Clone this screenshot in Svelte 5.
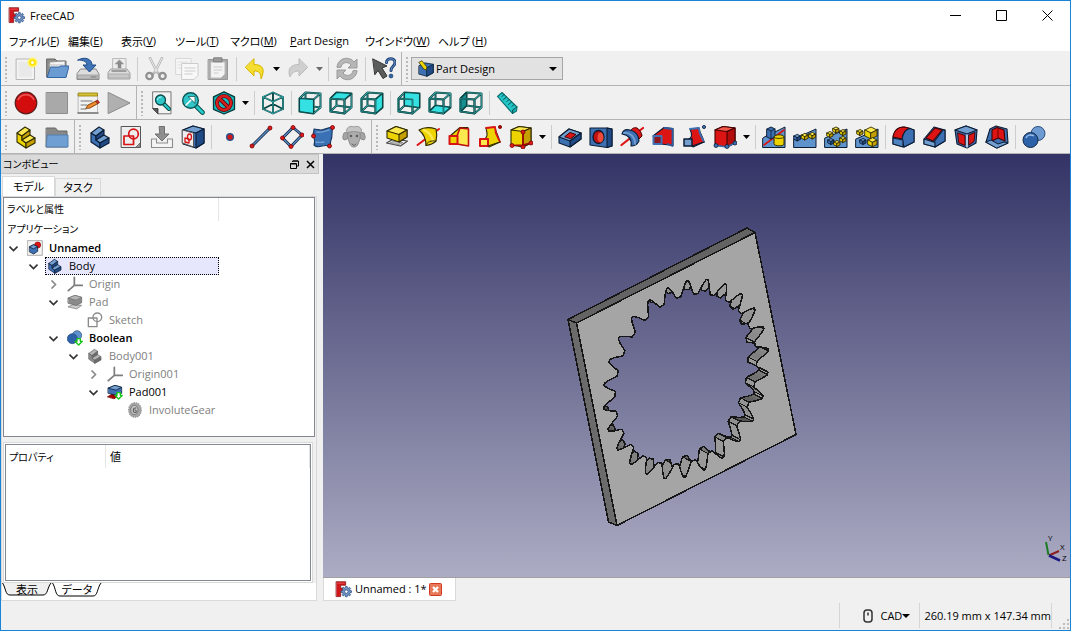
<script>
  const p = (d, fill = 'none', stroke = '#0b1521', w = 1.1) =>
    `<path d="${d}" fill="${fill}" stroke="${stroke}" stroke-width="${w}" stroke-linejoin="round" stroke-linecap="round"/>`;
  const dot = (x, y, r = 2, fill = '#e01b1b', stroke = '#7a0000') =>
    `<circle cx="${x}" cy="${y}" r="${r}" fill="${fill}" stroke="${stroke}" stroke-width=".8"/>`;

  const NAVY = '#0b1d35', BLUE = '#3d70b2', LIGHT = '#729fcf', DEEP = '#1f4a86';
  const YEL = '#edd400', PALE = '#fce94f', GOLD = '#c4a000', BROWN = '#302b00';
  const RED = '#dd1414', DRED = '#a40000';

  // Wireframe cube with one highlighted face
  const corners = { A: '1.5 7.5', B: '15.5 8.5', C: '15.5 22.5', D: '1.5 20.5', E: '7.5 1.5', F: '22.5 2.5', G: '22.5 16.5', H: '7.5 14.5' };
  const poly = (names) => 'M' + [...names].map((n) => corners[n]).join('L') + 'z';
  const wires = poly('ABCD') + poly('EFGH') + ['AE', 'BF', 'CG', 'DH'].map((n) => poly(n)).join('');
  const cube = (face) =>
    p(wires, 'none', '#0a4543', 2) + p(wires, 'none', '#3fb9b9', 0.6) +
    p(poly(face), face === 'ADHE' ? '#178f92' : '#34e0e2', '#0a4543', 1.1) +
    (face === 'ABCD' ? '' : p(poly('ABCD'), 'none', '#0a4543', 1.6) + p(poly('ABCD'), 'none', '#3fb9b9', 0.5));

  // Small isometric block
  const block = (x, y, s, top, left, right, line = NAVY) =>
    p(`M${x} ${y}l${s} ${-s / 2}l${s} ${s / 2}l${-s} ${s / 2}z`, top, line, 0.9) +
    p(`M${x} ${y}l${s} ${s / 2}v${s}l${-s} ${-s / 2}z`, left, line, 0.9) +
    p(`M${x + s} ${y + s / 2}l${s} ${-s / 2}v${s}l${-s} ${s / 2}z`, right, line, 0.9);
  const yb = (x, y, s) => block(x, y, s, PALE, YEL, GOLD, BROWN);
  const bb = (x, y, s) => block(x, y, s, LIGHT, BLUE, DEEP);

  // Stepped solid
  const step = (a, b, c, line) =>
    p('M3 8l5 3v4l4 3v5l-9-6z', b, line) + p('M3 8l8-6 5 3-8 6z', a, line) +
    p('M8 11l8-6v5l-8 5z', c, line) + p('M8 15l8-5 5 3-9 5z', a, line) + p('M12 18l9-5v5l-9 5z', c, line);

  const gearTeeth = (cx, cy, r, n) => {
    let d = '';
    for (let i = 0; i < n; i++) {
      const a = (i / n) * Math.PI * 2;
      for (const [o, k] of [[-0.26, 0.74], [-0.16, 1], [0.16, 1], [0.26, 0.74]]) {
        d += `${d ? 'L' : 'M'}${(cx + r * k * Math.cos(a + o)).toFixed(2)} ${(cy + r * k * Math.sin(a + o)).toFixed(2)}`;
      }
    }
    return d + 'z';
  };
  const downBadge = p('M15 13h5v4h3l-5.500 5.500-5.500-5.500h3z', '#fff', '#14c414', 2);

  const icons = {
    app: p('M2 1h13v5H8v4h5v4.500H8V22H2z', '#d3161b', '#7b0d10', 1) + p('M4 3h9', 'none', '#f56a6a', 1) +
      p(gearTeeth(16, 15, 7.5, 8), '#6d93c4', '#2a4a7d', 1) + `<circle cx="16" cy="15" r="2.400" fill="#fff" stroke="#2a4a7d"/>`,
    newDoc: p('M2.500 2h18v20.500h-18z', '#f4f4f4', '#b5b5b5', 1) + p('M5 5h13v15H5z', '#e9e9e9', '#ededed', 1) +
      `<circle cx="18.500" cy="5.500" r="5" fill="#fff36a"/><circle cx="18.500" cy="5.500" r="3.300" fill="#fbe30a"/><circle cx="18.500" cy="5.500" r="1.500" fill="#fff"/>`,
    open: p('M2 2h8l2 2h9v16H2z', '#8a8d88', '#666', 1) + p('M5 5l15-1v12H5z', '#f5f5f5', '#999', 1) + p('M4 8h14', 'none', '#bbb') +
      p('M6 10h8l2-1h8l-3 11.500H2.500z', '#6a9bd3', '#3465a4', 1),
    save: p('M5 12h15l3 5v5.500H1V17z', '#ddd', '#888', 1) + p('M2 18h20v4H2z', '#bcbcbc', '#999', 0.8) + p('M15 20h5', 'none', '#777') +
      p('M2 3c7-4 14-1 14 5h4l-6.500 7L7 8h4c0-3-3-5-9-5z', '#3f75b8', '#204a87', 1),
    print: p('M6 1.500h13v12H6z', '#ececec', '#bbb', 1) + p('M12.500 3l4 4h-2.500v4h-3V7H8.500z', '#8b8b8b', '#8b8b8b', 0.5) +
      p('M4 12h16l3 4v6H1v-6z', '#dcdcdc', '#a0a0a0', 1) + p('M2 17h20v4H2z', '#c8c8c8', '#a8a8a8', 0.8) + p('M5 14h14', 'none', '#888', 1.3),
    cut: p('M6 1l7 14 3 3M18 1l-7 14-3 3', 'none', '#b5b5b5', 2.6) + p('M6 1l7 14M18 1l-7 14', 'none', '#ececec', 1) +
      `<circle cx="5.500" cy="19" r="3.200" fill="none" stroke="#909090" stroke-width="2.300"/><circle cx="18.500" cy="19" r="3.200" fill="none" stroke="#909090" stroke-width="2.300"/>`,
    copy: p('M1 1.500h15v16H1z', '#f6f6f6', '#d8d8d8', 1) + p('M7 6.500h16v12l-4 4H7z', '#f8f8f8', '#cccccc', 1) + p('M10 11h10M10 14h10M10 17h7', 'none', '#dadada', 1.6) + p('M3 5h10M3 8h3M3 11h3', 'none', '#ddd'),
    paste: p('M2.500 2.500h19v20h-19z', '#aaa', '#979797', 1) + p('M5 5h14v12l-4 4H5z', '#f3f3f3', '#bbb', 1) + p('M8 .8h8v4H8z', '#9b9b9b', '#808080', 1) + p('M8 10h8M8 13h8M8 16h4', 'none', '#ccc'),
    undo: p('M11 2v5.500c8 0 12 4 7 14.500 0-6-2-8-7-8v5L2.500 10.500z', '#f5dc30', '#d6b600', 1),
    redo: p('M13 2v5.500C5 7.500 1 11.500 4 20c2-4 4-6 9-6v5l8.500-8.500z', '#cfcfcf', '#bbb', 1),
    refresh: p('M2 10C3 0 15-1 19 5l3-3v9h-9l3-3C13 4 7 5 6 10z', '#b6b6b6', '#9a9a9a', 1) + p('M22 14c-1 10-13 11-17 5l-3 3v-9h9l-3 3c3 4 9 3 10-2z', '#b6b6b6', '#9a9a9a', 1),
    whats: p('M1 2l14 7-5 2 5 8-4 2.500-5-8-3 4z', '#5a5d5c', '#333', 1) + p('M14.500 5.500c0-5 8.500-5 8.500 0 0 4-4 3.500-4 8', 'none', '#1d4176', 3) + p('M14.500 5.500c0-5 8.500-5 8.500 0 0 4-4 3.500-4 8', 'none', '#6b99d0', 1) + dot(19, 19, 1.9, '#3465a4', '#1d4176'),
    record: `<circle cx="12" cy="12" r="10.800" fill="#d30d0d" stroke="#5c1d1d" stroke-width="1.200"/><path d="M4 9c3-7 13-7 16 0" fill="none" stroke="#ee5a5a" stroke-width="1.500"/>`,
    stop: p('M1.500 1.500h21v21h-21z', '#a9a9a9', '#8d8d8d', 1),
    macro: p('M2.500 3h19v19h-19z', '#f2f2f2', '#bbb', 1) + p('M2 22h20', 'none', '#777', 1.6) + p('M2.500 2h19v3h-19z', '#d8c338', '#8f7a00', 0.8) + p('M5 10h11M5 14h6M5 18h5', 'none', '#777', 1.1) + p('M10 17l2-3 8-4 2 2.500-8 4.500z', '#f08a2e', '#7a3c00', 0.9) + p('M20 10l1.500-1 2 2.500-1.500 1z', '#e0312c', '#7a1c1c', 0.8),
    play: p('M1.500 1.500L23 12 1.500 22.500z', '#b0b0b0', '#8a8a8a', 1),
    fitAll: p('M3 .8h18v22H8l-5-5z', '#f3f3f3', '#777', 1) + p('M3 17.500h5v5z', '#555', '#333', 0.8) + p('M13 12l6 6', 'none', '#0b4a4a', 4) + p('M13 12l6 6', 'none', '#24cccc', 2) + `<circle cx="10.500" cy="9" r="5" fill="#2fc6c8" stroke="#0b4a4a" stroke-width="1.300"/><path d="M7.500 9c0-2 2-3 4-3" stroke="#c8ffff" fill="none"/>`,
    zoomSel: p('M14 14l7.500 7.500', 'none', '#0b4a4a', 4.6) + p('M14 14l7.500 7.500', 'none', '#24cccc', 2.8) + `<circle cx="9.500" cy="9.500" r="7.800" fill="#31c5c8" stroke="#0b5555" stroke-width="1.400"/>` + p('M5 14l6-6', 'none', '#fff', 1.6) + p('M7.500 5.500H14V12z', '#fff', '#0b4a4a', 0.7),
    drawStyle: p('M12 .8l10.500 5v12.500L12 23 1.500 18.300V5.800z', '#18b9bd', '#063a3a', 1.3) + `<circle cx="12" cy="12" r="7" fill="none" stroke="#5a0505" stroke-width="4"/>` + p('M7.500 7.500l9 9', 'none', '#5a0505', 4) + `<circle cx="12" cy="12" r="7" fill="none" stroke="#d82020" stroke-width="2.400"/>` + p('M7.500 7.500l9 9', 'none', '#d82020', 2.4),
    iso: p('M12 1.500l10 4.500v12L12 22.500 2 18V6zM2 6l10 4.500L22 6M12 10.500v12M2 18l10-5 10 5M12 1.500V13', 'none', '#0a4543', 1.9) + p('M12 1.500l10 4.500v12L12 22.500 2 18V6zM2 6l10 4.500L22 6M12 10.500v12', 'none', '#3fc9c9', 0.7),
    front: cube('ABCD'), top: cube('ABFE'), right: cube('BCGF'), rear: cube('EFGH'), bottom: cube('DCGH'), left: cube('ADHE'),
    ruler: p('M1.500 5.500L6 1.500l15 14.500-.5 4-4 2.500z', '#22c4c6', '#0a6c6c', 1.1) + p('M21 16l-4.500 3v3.500', '#129a9c', '#0a5c5c', 1) + p('M8 3.500l-2 2M10.500 6l-3 2.500M13 8.500l-2 2M15.500 11l-3 2.500M18 13.500l-2 2', 'none', '#0a4a4a', 1),
    part: step(PALE, YEL, GOLD, BROWN),
    group: p('M1.500 3h9l2.500 3h9v16h-20.500z', '#888', '#666', 1) + p('M2.500 10h20.500v12H1.500z', '#709fd3', '#5580af', 1),
    body: step(LIGHT, BLUE, DEEP, NAVY),
    bodyGrey: step('#b5b5b5', '#8b8b8b', '#6b6b6b', '#666'),
    sketch: p('M2.500 1.500h19v21h-19z', '#eee', '#555', 1) + p('M5 11h9.500v8.500H5z', 'none', '#d81313', 1.7) + `<circle cx="14.500" cy="9" r="4.800" fill="none" stroke="#d81313" stroke-width="1.700"/>` + p('M17 22l4-4v4z', '#999', '#666', 0.8),
    importSk: p('M1.500 14h5v4h11v-4h5v8.500h-21z', '#f4f4f4', '#8c8c8c', 1.1) + p('M9.500 1.500h5V9h4.500L12 16 5 9h4.500z', '#8f8f8f', '#707070', 1),
    mapSk: p('M2 5l10-4 11 3v14l-8 5-13-4z', BLUE, NAVY) + p('M2 5l10-4 11 3-8 4z', LIGHT, NAVY) + p('M15 8l8-4v14l-8 5z', DEEP, NAVY) + p('M1.500 5l11 3v14l-11-4z', '#eee', '#555', 1) + p('M4 13l4 1v4l-4-1z', 'none', '#d81313', 1.3) + `<ellipse cx="8.500" cy="12" rx="2" ry="3" fill="none" stroke="#d81313" stroke-width="1.300"/>`,
    point: `<circle cx="12" cy="12" r="3.300" fill="#d01818" stroke="#28508d" stroke-width="1.400"/>`,
    line: p('M3 21L21 3', 'none', NAVY, 3) + p('M3 21L21 3', 'none', '#5a8ac8', 1.5) + dot(3, 21) + dot(21, 3),
    plane: p('M13 2.500L22 10 11 21.500 2.500 13z', 'none', NAVY, 2.8) + p('M13 2.500L22 10 11 21.500 2.500 13z', 'none', '#5a8ac8', 1.4) + dot(13, 2.5) + dot(22, 10) + dot(11, 21.5) + dot(2.5, 13),
    binder: p('M3 4c3 0 4 1 7 1 4 0 7-3 12-3-2 5 0 9-2 13-1 2 0 4-1 6-4-1-5-1-8 0-3 1-6 1-8-1 1-3 1-6-1-9 0-3 1-4 1-7z', '#3a70b4', '#16365f') + p('M6 7c5 1 8-1 12-2M5 17c3 1 6 0 8 0', 'none', LIGHT, 1.4) + dot(21.5, 2.5) + dot(2.5, 11) + dot(18.5, 21),
    sheep: p('M7 7l-5 1c-1 3-2 5 0 7l3-1zM17 7l5 1c1 3 2 5 0 7l-3-1z', '#a5a5a5', '#8a8a8a', 1) + p('M6 8c3-2 9-2 12 0 1 5-1 8-2 11-1 4-7 4-8 0-1-3-3-6-2-11z', '#adadad', '#8a8a8a', 1) + p('M5 8C3 3 8 0 12 2c4-2 9 1 7 6-4-2-10-2-14 0z', '#c4c4c4', '#999', 1) + dot(9, 11, 0.9, '#555', '#555') + dot(15, 11, 0.9, '#555', '#555') + p('M10 19l2 1.500 2-1.500', 'none', '#666', 1),
    pad: p('M1.500 18l7-4 14 2-7 5z', '#f2f2f2', '#444', 1.2) + p('M5 18l4-2 9 1.500-4 2z', '#bbb', '#777', 0.7) + p('M2 6l9-4.500L22 5v7l-8 5L2 13z', YEL, BROWN) + p('M2 6l9-4.500L22 5l-8 4.500z', PALE, BROWN) + p('M14 9.500L22 5v7l-8 5z', GOLD, BROWN),
    revolve: p('M1.500 20L23 4', 'none', RED, 2) + p('M3 5c5-3 11-3 17-1 1 4 1 8 0 12-3 3-6 4-10 4.500C10 14 8 9 3 5z', YEL, BROWN) + p('M8 5c5 2 8 6 9 11', 'none', PALE, 2.5) + p('M10 20.500c1-4 5-5 10-4.500', 'none', BROWN, 1),
    loftY: p('M3 11L13 2.500h8v18L10 19z', YEL, BROWN) + p('M13 3l8.500 1v17L10 19V11z', PALE, '#c01010', 1.6) + p('M2.500 11h8v8h-8z', YEL, '#d81313', 2),
    sweepY: p('M5 15C11 12 9 8 8 3l9-1c1 6 4 10 5 15l-11 5z', YEL, BROWN) + p('M8 3l9-1c0 8 3 10 5 15', 'none', RED, 1.8) + p('M2 14h8v7H2z', PALE, '#d81313', 2) + p('M10 21l12-4', 'none', BROWN) + dot(22, 2, 1.6, DRED),
    boxY: p('M2 5l8-3.500L22 3v15l-8 4-12-2z', YEL, BROWN) + p('M2 5l8-3.500L22 3l-8 3.500z', PALE, BROWN) + p('M14 6.500L22 3v15l-8 4z', GOLD, BROWN) + p('M14 7v13M14 20L3 20.500M14 20l8-2', 'none', DRED, 1.6) + dot(14, 7) + dot(3, 20.5) + dot(22, 18) + dot(14, 22),
    pocket: p('M1 12l10-8 12 4v6l-11 8-11-4z', BLUE, NAVY) + p('M1 12l10-8 12 4-11 8z', LIGHT, NAVY) + p('M12 16l11-8v6l-11 8z', DEEP, NAVY) + p('M7 11.500l5-4 6 2-5 4z', RED, '#400', 1),
    hole: p('M1 3h17l5 1v17l-5 1.500L1 20z', BLUE, NAVY) + p('M18 3l5 1v17l-5 1.500z', DEEP, NAVY) + `<ellipse cx="9.500" cy="12" rx="5.500" ry="6.500" fill="#c01010" stroke="#081a33" stroke-width="1.300"/><ellipse cx="11.500" cy="12.500" rx="3" ry="5" fill="#f04a3a"/>`,
    groove: p('M1.500 20L23 3', 'none', RED, 2.2) + p('M10 6c2-3 5-4 7-3s5 5 5 8l-5 5z', RED, '#400', 1) + p('M2 9c1-4 4-5 8-4 6 1 9 6 9 11-2 4-5 5-8 5 1-7-3-11-9-12z', BLUE, NAVY) + p('M4 8c6-1 11 4 11 11', 'none', LIGHT, 1.8),
    loftR: p('M2 11L13 2.500l9 1v17L10 19z', RED, NAVY) + p('M13.500 3l8 1v17l-5-2', 'none', '#2f5c9d', 1.8) + p('M2.500 11h8v8h-8z', '#8b1720', '#3f70b4', 2),
    sweepR: p('M5 15C11 13 10 9 8 4l9-1c1 6 4 9 5 14l-11 5z', RED, NAVY) + p('M8 4l9-1c0 8 3 9 5 14', 'none', BLUE, 1.8) + p('M2 14h8v7H2z', LIGHT, NAVY, 1.5) + p('M10 21l12-4', 'none', NAVY) + dot(22, 2, 1.6, BLUE, NAVY),
    boxR: p('M2 5l8-3.500L22 3v15l-8 4-12-2z', RED, '#400') + p('M2 5l8-3.500L22 3l-8 3.500z', '#f25b4c', '#400') + p('M14 6.500L22 3v15l-8 4z', '#b40d0d', '#400') + p('M3 20.500L14 22l8-4', 'none', BLUE, 1.5) + dot(3, 20.5, 2, BLUE, NAVY) + dot(22, 18, 2, BLUE, NAVY) + dot(14, 21.5, 2, BLUE, NAVY),
    mirror: p('M1 13l8-5 6-2 8-4v20.500H1z', '#5f93cc', NAVY, 1) + p('M2 20l20-15', 'none', RED, 1.6) + p('M5 4l4-2 4 2v8l-4 2-4-2z', BLUE, NAVY, 1) + p('M5 4l4 2 4-2M9 6v8', 'none', NAVY, 0.8) + p('M12 12c0-3 10-3 10 0v7c0 2.500-10 2.500-10 0z', YEL, BROWN, 1) + p('M12 12c0 2 10 2 10 0', 'none', BROWN, 0.9),
    linear: p('M1 14L23 4v18.500H1z', '#5f93cc', NAVY, 1) + bb(1, 11, 3.3) + yb(8.500, 10, 3.3) + yb(16, 9, 3.3),
    polar: p('M1 13L23 4v18.500H1z', '#5f93cc', NAVY, 1) + yb(9, 3.500, 3) + yb(16, 6, 3) + yb(3, 8, 3) + yb(16, 13, 3) + bb(4, 15, 3) + yb(10, 17, 3),
    multi: p('M1 14L23 4v18.500H1z', '#5f93cc', NAVY, 1) + yb(10, 5, 6) + yb(2, 6, 3) + bb(5, 15, 3) + yb(13, 15, 4.5),
    fillet: p('M1 13C2 5 7 2 12 2l10 3v12l-10 5-11-3z', BLUE, NAVY) + p('M1 12C2 5 7 2 12 2l6 1.200C14 4 11 8 10 14z', RED, '#400') + p('M10 14.500C11 8 14 4 18 3.500L22 5v12l-10 5z', BLUE, NAVY) + p('M1 13l10 2v7L1 19z', '#4f82c0', NAVY),
    chamfer: p('M1 14L11 2l11 3v11l-10 6-11-3z', BLUE, NAVY) + p('M3 13L12 3l7 2-9 11z', RED, '#400') + p('M11 17l9-12 2 0v11l-10 6z', BLUE, NAVY) + p('M1 14l11 3.500V22L1 19z', LIGHT, NAVY),
    draft: p('M1 5l11-4 11 4-1 13-9 5-10-4z', BLUE, NAVY) + p('M1 5l11-4 11 4-10 4z', LIGHT, NAVY) + p('M4 8l7 2.500v10l-6-2.500zM15 10l6-2.500-1 9-5 3.500z', RED, '#400', 0.9) + p('M13 10v12', 'none', '#e9eef5', 1.4),
    thick: p('M1 17L5 4l6-3 11 3 1 14-11 5z', BLUE, NAVY) + p('M7 5l5-2.500 7 2.500 1 11-7-3-6 3z', RED, '#400') + p('M13 3v10', 'none', '#7a0000', 1.1) + p('M1 17l5-2 7 4 6-2 4 1-11 5z', LIGHT, NAVY, 1),
    bool: `<circle cx="16" cy="8.500" r="7" fill="#6e9bd1" stroke="#2b4e80"/><circle cx="8.500" cy="15" r="7.500" fill="#2e62a8" stroke="#12294a"/><path d="M4 13c1-3 5-4 8-2" fill="none" stroke="#9bc0ea" stroke-width="1.500"/>`,
    wb: p('M3 8l8-4 12 2v12l-9 5-11-3z', BLUE, NAVY) + p('M14 11l9-5v12l-9 5z', DEEP, NAVY) + p('M3 3l4-2 7 9-1 4-3-1z', YEL, BROWN, 1),
    doc: p('M1 1h22v22H1z', '#f3f3f3', '#888', 1) + `<circle cx="16" cy="7.500" r="4.500" fill="#dd1414" stroke="#900"/>` + p('M4 10l6-3 6 3v7l-6 4-6-3z', BLUE, NAVY) + p('M4 10l6-3 6 3-6 3z', LIGHT, NAVY),
    origin: p('M11 2v12h12M11 14L2 22', 'none', '#7d7d7d', 2.6),
    padGrey: p('M2 19l7-3 13 1-7 5z', '#ccc', '#777') + p('M2 6l10-4 10 3v8l-8 4-12-3z', '#8b8b8b', '#666') + p('M2 6l10-4 10 3-8 4z', '#b5b5b5', '#777'),
    sketchGrey: p('M2 9h13v13H2z', 'none', '#8a8a8a', 2) + `<circle cx="15.500" cy="8" r="6.500" fill="none" stroke="#8a8a8a" stroke-width="2"/>`,
    boolTree: `<circle cx="15" cy="8" r="7" fill="#5f92cc" stroke="#2b4e80"/><circle cx="8" cy="13" r="7.500" fill="#2e62a8" stroke="#204a80"/>` + downBadge,
    padTree: p('M1 19l7-4 10 2-7 5z', DRED, '#700') + p('M2 6l10-4 10 3v9l-8 3-12-3z', BLUE, NAVY) + p('M2 6l10-4 10 3-8 4z', LIGHT, NAVY) + downBadge,
    gear: `<ellipse cx="12" cy="12" rx="9.500" ry="11" fill="#a6a6a6" stroke="#8a8a8a" stroke-width="1.600" stroke-dasharray="2 1.500"/><ellipse cx="11" cy="12" rx="5.500" ry="7" fill="#c6c6c6" stroke="#777" stroke-width="1.400"/>` + p('M13 9c-4-1-5 7-1 7 3 0 2-4 0-4', 'none', '#555', 1.6)
  };

  const menus = [
    ['ファイル', 'F'], ['編集', 'E'], ['表示', 'V'], ['ツール', 'T'], ['マクロ', 'M'], ['Part Design', ''], ['ウインドウ', 'W'], ['ヘルプ ', 'H']
  ];

  // '|' is a separator, 'v' a drop-down arrow, 'x' a disabled arrow
  const rows = [
    ['newDoc open save print | cut copy paste | undo v redo x | refresh | whats', 'workbench'],
    ['record stop macro play', 'fitAll zoomSel drawStyle v | iso | front top right | rear bottom left | ruler'],
    ['part group', 'body sketch importSk mapSk | point line plane binder sheep', 'pad revolve loftY sweepY boxY v | pocket hole groove loftR sweepR boxR v | mirror linear polar multi | fillet chamfer draft thick | bool']
  ].map((row) => row.map((bar) => bar.split(' ')));

  const tree = [
    { name: 'Unnamed', icon: 'doc', level: 0, open: true, bold: true },
    { name: 'Body', icon: 'body', level: 1, open: true },
    { name: 'Origin', icon: 'origin', level: 2, open: false, dim: true },
    { name: 'Pad', icon: 'padGrey', level: 2, open: true, dim: true },
    { name: 'Sketch', icon: 'sketchGrey', level: 3, dim: true },
    { name: 'Boolean', icon: 'boolTree', level: 2, open: true, bold: true },
    { name: 'Body001', icon: 'bodyGrey', level: 3, open: true, dim: true },
    { name: 'Origin001', icon: 'origin', level: 4, open: false, dim: true },
    { name: 'Pad001', icon: 'padTree', level: 4, open: true },
    { name: 'InvoluteGear', icon: 'gear', level: 5, dim: true }
  ];
  let selected = $state('Body');

  // Gear-shaped opening: polar profile projected on the plate's two half-edges
  const TEETH = 26;
  const center = [686, 379], ea = [89.4, -45], eb = [20.5, 101], depth = [-8.6, -4.4];
  const profile = [[-5.2, 0.772], [-4.6, 0.785], [-3.8, 0.81], [-2.9, 0.84], [-1.9, 0.87], [-0.7, 0.9], [0.7, 0.9], [1.9, 0.87], [2.9, 0.84], [3.8, 0.81], [4.6, 0.785], [5.2, 0.772]];
  const rim = [];
  for (let i = 0; i < TEETH; i++) {
    for (const [off, k] of profile) {
      const t = (((i + 0.5) * 360) / TEETH + off) * (Math.PI / 180);
      rim.push([
        center[0] + k * (Math.cos(t) * ea[0] + Math.sin(t) * eb[0]),
        center[1] + k * (Math.cos(t) * ea[1] + Math.sin(t) * eb[1])
      ]);
    }
  }
  const pt = ([x, y]) => `${x.toFixed(1)} ${y.toFixed(1)}`;
  const back = rim.map(([x, y]) => [x + depth[0], y + depth[1]]);
  const rimPath = 'M' + rim.map(pt).join('L') + 'z';
  const backPath = 'M' + back.map(pt).join('L') + 'z';
  const walls = rim.map((a, i) => {
    const j = (i + 1) % rim.length;
    const b = rim[j];
    const len = Math.hypot(b[0] - a[0], b[1] - a[1]);
    const g = Math.round(80 + 75 * Math.abs((b[1] - a[1]) / len));
    return { d: `M${pt(a)}L${pt(b)}L${pt(back[j])}L${pt(back[i])}z`, fill: `rgb(${g},${g},${g})` };
  });
  const ribs = rim.map((a, i) => ({ a, b: back[i], k: i % profile.length })).filter((r) => [0, 5, 6, 11].includes(r.k))
    .map((r) => `M${pt(r.a)}L${pt(r.b)}`).join('');
  const face = 'M576.500 323L755 232.500L796 434.500L617 525.500z';
</script>

{#snippet icon(name, size = 24)}
  <svg class="icon" width={size} height={size} viewBox="0 0 24 24" aria-hidden="true">{@html icons[name]}</svg>
{/snippet}

<div class="window">
  <header class="title">
    {@render icon('app', 17)}
    <span class="caption">FreeCAD</span>
    <button aria-label="Minimize"><svg width="11" height="11"><path d="M0 5.500h11" /></svg></button>
    <button aria-label="Maximize"><svg width="11" height="11"><path d="M.5.5h10v10H.5z" /></svg></button>
    <button aria-label="Close"><svg width="11" height="11"><path d="M.5.5l10 10M10.500.5l-10 10" /></svg></button>
  </header>

  <nav class="menu">
    {#each menus as [label, key]}
      {#if key}
        <button><span class="label">{label}</span>(<u>{key}</u>)</button>
      {:else}
        <button><u>P</u>art Design</button>
      {/if}
    {/each}
  </nav>

  {#each rows as row}
    <div class="bars">
      {#each row as bar}
        <div class="bar" role="toolbar">
          <i class="grip"></i>
          {#each bar as item}
            {#if item === '|'}
              <i class="sep"></i>
            {:else if item === 'v' || item === 'x'}
              <button class="drop" class:off={item === 'x'} aria-label="More"><svg width="7" height="4"><path d="M0 0h7L3.500 4z" /></svg></button>
            {:else if item === 'workbench'}
              <div class="combo">
                {@render icon('wb', 17)}
                <select aria-label="Workbench"><option>Part Design</option></select>
                <svg class="arrow" width="8" height="4"><path d="M0 0h8L4 4z" /></svg>
              </div>
            {:else}
              <button class="tool" aria-label={item}>{@render icon(item)}</button>
            {/if}
          {/each}
        </div>
      {/each}
    </div>
  {/each}

  <main>
    <aside>
      <div class="dock">
        <span class="kana">コンボビュー</span>
        <button aria-label="Float"><svg width="9" height="9"><path d="M2.500 2V1h6v5H7M.5 3.500h6v5h-6zM.5 4h6M3 1h5" /></svg></button>
        <button aria-label="Close panel"><svg width="9" height="9"><path class="thick" d="M1 1l7 7M8 1L1 8" /></svg></button>
      </div>
      <div class="tabs">
        <button class="on">モデル</button>
        <button>タスク</button>
      </div>
      <div class="pane">
        <div class="tree">
          <div class="thead kana"><span>ラベルと属性</span></div>
          <div class="root kana">アプリケーション</div>
          <ul>
            {#each tree as node}
              <li class:dim={node.dim} class:bold={node.bold} style:--level={node.level}>
                <span class="twig">
                  {#if node.open !== undefined}
                    <svg class:shut={!node.open} width="9" height="9"><path d={node.open ? 'M.5 2.500l4 4 4-4' : 'M2.500.5l4 4-4 4'} /></svg>
                  {/if}
                </span>
                <button class="node" class:sel={selected === node.name} onclick={() => (selected = node.name)}>
                  {@render icon(node.icon, 16)}<span>{node.name}</span>
                </button>
              </li>
            {/each}
          </ul>
        </div>
        <div class="props">
          <div class="grid">
            <table><thead><tr><th class="kana">プロパティ</th><th>値</th></tr></thead></table>
          </div>
        </div>
        <div class="foot">
          <button class="ear"><svg viewBox="0 0 50 14" preserveAspectRatio="none"><path d="M.5 0C4 5 3 12 8 12h33c5 0 4-7 8-12" /></svg><span>表示</span></button>
          <button class="ear on"><svg viewBox="0 0 50 14" preserveAspectRatio="none"><path d="M.5 0C4 5 3 13 8 13h33c5 0 4-8 8-13" /></svg><span>データ</span></button>
        </div>
      </div>
    </aside>

    <section>
      <div class="view">
        <svg class="scene" viewBox="323 154 747 423" role="img" aria-label="Unnamed">
          <clipPath id="front-rim"><path d={rimPath} /></clipPath>
          <mask id="not-through" maskUnits="userSpaceOnUse" x="323" y="154" width="747" height="424">
            <rect x="323" y="154" width="747" height="424" fill="#fff" />
            <path d={backPath} fill="#000" />
          </mask>
          <g stroke="#161616" stroke-width="1.500" stroke-linejoin="round" shape-rendering="crispEdges">
            <path d="M576.500 323L568 319.500L747 228L755 232.500z" fill="#636363" />
            <path d="M576.500 323L568 319.500L608.500 522L617 525.500z" fill="#6b6b6b" />
            <path d={face + rimPath} fill="#a5a5a5" fill-rule="evenodd" />
            <g clip-path="url(#front-rim)">
              <g mask="url(#not-through)">
                {#each walls as wall}
                  <path d={wall.d} fill={wall.fill} stroke={wall.fill} stroke-width="0.500" />
                {/each}
                <path d={ribs} fill="none" stroke-width="1.200" />
              </g>
              <path d={backPath} fill="none" stroke-width="1.500" />
            </g>
            <path d={rimPath} fill="none" />
          </g>
        </svg>
        <svg class="axes" width="28" height="34" viewBox="1042 530 28 34">
          <path d="M1048.500 555L1046 542" stroke="#1d7d24" stroke-width="2" />
          <path d="M1049 555.500l10-4.500" stroke="#8c2020" stroke-width="2" />
          <path d="M1049 555.500l11 5" stroke="#1a1a82" stroke-width="2.500" />
          <g><text x="1048" y="541">Y</text><text x="1060" y="550">X</text><text x="1062" y="561">Z</text></g>
        </svg>
      </div>
      <div class="docs">
        <div class="doc">
          {@render icon('app', 17)}<span>Unnamed : 1*</span>
          <button aria-label="Close document"><svg width="13" height="13" viewBox="0 0 13 13"><rect x="0.500" y="0.500" width="12" height="12" rx="1" fill="#e8785a" stroke="#cf3a20" /><path d="M4 4l5 5M9 4l-5 5" stroke="#fff" stroke-width="2.200" /></svg></button>
        </div>
      </div>
    </section>
  </main>

  <footer>
    <button class="nav">
      <svg width="10" height="14" viewBox="0 0 10 14"><rect x="1" y="1" width="8" height="12" rx="3" /><path d="M5 3.500v3" /></svg>
      CAD<svg class="tri" width="8" height="4"><path d="M0 0h8L4 4z" /></svg>
    </button>
    <span class="size">260.19 mm x 147.34 mm</span>
    <svg class="corner" width="11" height="11"><path d="M8 0h2v2H8zM4 4h2v2H4zM8 4h2v2H8zM0 8h2v2H0zM4 8h2v2H4zM8 8h2v2H8z" /></svg>
  </footer>
</div>

<style>
  :global(body) { margin: 0; }
  .window {
    display: flex; flex-direction: column; box-sizing: border-box; height: 100vh; min-height: 600px;
    border: 1px solid #1883d7; background: #f0f0f0; color: #000; overflow: hidden;
    font: 11px/16px "Open Sans", "Noto Sans CJK JP", sans-serif;
  }
  button, select { font: inherit; color: inherit; background: none; border: 0; padding: 0; margin: 0; }
  button { display: flex; align-items: center; justify-content: center; }
  svg { display: block; flex: none; }
  .kana { font-family: "Noto Sans CJK JP", sans-serif; font-size: 10px; font-feature-settings: "palt"; }

  .title { display: flex; align-items: center; height: 29px; background: #fff; padding-left: 7px; }
  .caption { flex: 1; margin-left: 5px; }
  .title button { width: 46px; height: 29px; }
  .title button svg { fill: none; stroke: #000; }

  .menu { display: grid; grid-template-columns: 59px 53px 54px 55px 60px 75px 73px auto; align-items: center; height: 21px; padding-left: 8px; background: #fff; border-bottom: 1px solid #f0f0f0; }
  .menu button { justify-content: flex-start; white-space: nowrap; }
  .label { white-space: pre; font-family: "Noto Sans CJK JP", sans-serif; font-feature-settings: "palt"; }

  .bars { display: flex; height: 33px; border-bottom: 1px solid #b4b4b4; }
  .bar { display: flex; align-items: center; padding-right: 2px; border-right: 1px solid #b4b4b4; }
  .bar:last-child { border-right: 0; }
  .grip { width: 9px; height: 26px; background: radial-gradient(circle, #b9b9b9 1px, transparent 1px) 3px 0 / 4px 4px repeat-y; }
  .tool { width: 31px; height: 31px; }
  .sep { box-sizing: border-box; width: 6px; height: 24px; background: linear-gradient(#cdcdcd, #cdcdcd) 3px 0 / 1px 100% no-repeat; }
  .drop { width: 12px; height: 24px; }
  .off { opacity: 0.55; }
  .combo { display: flex; align-items: center; box-sizing: border-box; width: 152px; height: 23px; border: 1px solid #a6a6a6; background: #e2e2e2; padding: 0 5px; }
  .combo select { flex: 1; appearance: none; margin-left: 2px; outline: 0; }
  .combo .arrow { pointer-events: none; }

  main { display: flex; flex: 1; min-height: 0; }
  aside { display: flex; flex-direction: column; width: 318px; margin-right: 4px; }
  .dock { display: flex; align-items: center; box-sizing: border-box; height: 20px; padding: 0 0 0 2px; background: #dadada; border: 1px solid #c3c3c3; border-left: 0; }
  .dock .kana { flex: 1; }
  .dock button { width: 16px; height: 16px; }
  .dock svg { fill: none; stroke: #000; }
  .dock .thick { stroke-width: 1.5; }
  .tabs { display: flex; align-items: flex-end; height: 22px; padding-left: 1px; }
  .tabs button { box-sizing: border-box; width: 46px; height: 18px; border: 1px solid #d9d9d9; border-bottom: 0; font-feature-settings: "palt"; }
  .tabs .on { width: 53px; height: 20px; background: #fff; }
  .pane { display: flex; flex-direction: column; flex: 1; min-height: 0; margin-right: 2px; border: 1px solid #d9d9d9; background: #f0f0f0; }
  .tree { box-sizing: border-box; flex: 241 1 0; margin: 0 1px; min-height: 0; background: #fff; border: 1px solid #828790; overflow: hidden; }
  .thead { height: 23px; box-sizing: border-box; width: 215px; border-right: 1px solid #e5e5e5; padding: 3px 0 0 3px; }
  .root { height: 18px; padding-left: 3px; }
  ul { list-style: none; margin: 0; padding: 0; }
  li { display: flex; height: 18px; width: 214px; padding-left: calc(var(--level) * 20px); box-sizing: border-box; }
  .twig { flex: none; width: 22px; display: flex; align-items: center; padding-left: 5px; padding-right: 8px; box-sizing: border-box; }
  .twig svg { fill: none; stroke: #333; stroke-width: 1.6; }
  .twig .shut { stroke: #888; }
  .node { flex: 1; justify-content: flex-start; gap: 6px; margin-left: -1px; margin-right: -1px; border: 1px solid transparent; padding-left: 1px; }
  .node.sel { background: #e6e6fd; border: 1px dotted #000; }
  .dim { color: #808080; }
  .bold { font-weight: 600; }
  .props { display: flex; flex: 138 1 0; margin: 5px 3px 0 1px; border: 1px solid #d9d9d9; background: #fff; padding: 1px; min-height: 0; }
  .grid { flex: 1; border: 1px solid #828790; }
  table { width: 100%; border-collapse: collapse; }
  th { font-weight: 400; text-align: left; padding: 4px; line-height: 15px; border-right: 1px solid #e5e5e5; }
  th:first-child { width: 92px; padding-left: 3px; }
  .foot { display: flex; height: 17px; background: #fff; }
  .ear { position: relative; width: 50px; height: 14px; font-feature-settings: "palt"; }
  .ear svg { position: absolute; inset: 0; width: 100%; height: 14px; fill: #f0f0f0; stroke: #000; }
  .ear.on svg { fill: #fff; }
  .ear span { position: relative; line-height: 12px; }

  section { display: flex; flex-direction: column; flex: 1; min-width: 0; }
  .view { position: relative; flex: 1; min-height: 0; background: linear-gradient(#333366, #acacc4); border-bottom: 1px solid #a0a0a0; }
  .scene { width: 100%; height: 100%; }
  .axes { position: absolute; right: 0; bottom: 13px; font-size: 8px; }
  .docs { height: 23px; }
  .doc { display: flex; align-items: center; box-sizing: border-box; width: 133px; height: 23px; padding-left: 11px; background: #fff; border: 1px solid #d9d9d9; border-top: 0; }
  .doc span { margin-left: 3px; flex: 1; white-space: nowrap; }
  .doc button { margin-right: 13px; }

  footer { display: flex; justify-content: flex-end; align-items: center; height: 29px; }
  .nav { height: 25px; width: 81px; box-sizing: border-box; padding-left: 14px; border-left: 1px solid #d5d5d5; border-right: 1px solid #d5d5d5; }
  .nav svg { fill: none; stroke: #333; stroke-width: 1.5; margin-right: 7px; }
  .nav .tri { fill: #000; stroke: none; margin-right: 0; }
  .size { height: 25px; line-height: 25px; padding-left: 4px; border-right: 1px solid #d5d5d5; white-space: nowrap; }
  .corner { margin-left: 7px; fill: #bdbdbd; align-self: flex-end; }
</style>
